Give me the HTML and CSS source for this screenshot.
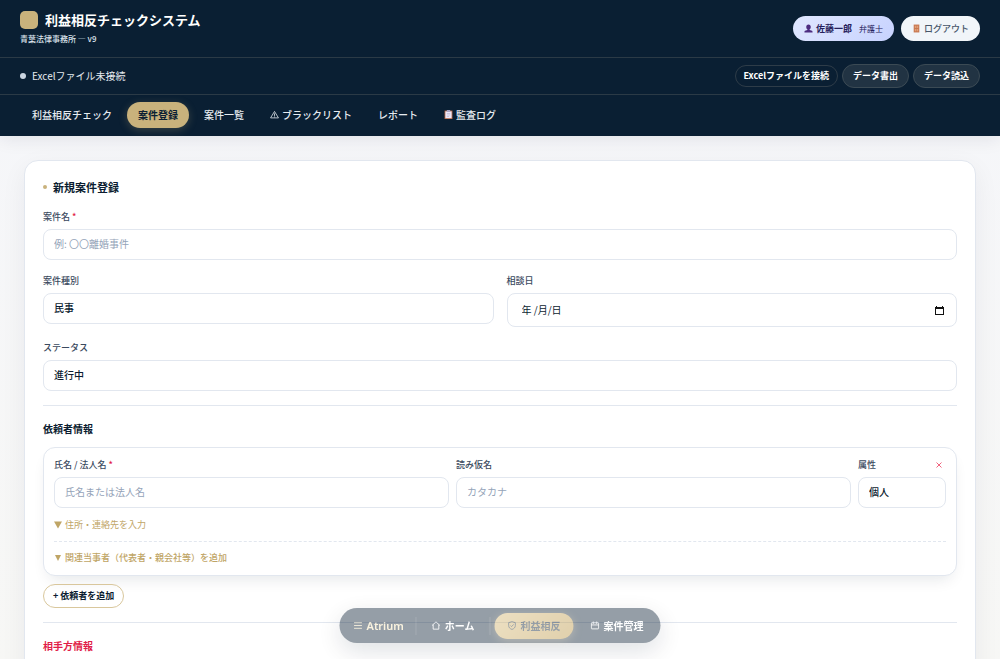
FILE: index.html
```html
<!DOCTYPE html>
<html lang="ja">
<head>
<meta charset="utf-8">
<meta name="viewport" content="width=device-width, initial-scale=1">
<title>利益相反チェックシステム</title>
<link rel="stylesheet" href="styles.css">
</head>
<body>
<header class="site-header">
  <div class="brand-row">
    <div class="brand-block">
      <div class="brand">
        <span class="logo"></span>
        <h1 class="brand-name">利益相反チェックシステム</h1>
      </div>
      <p class="firm">青葉法律事務所 — v9</p>
    </div>
    <div class="account">
      <span class="user-chip">
        <svg class="emoji" viewBox="0 0 16 16" aria-hidden="true"><path fill="#4d2c80" d="M8 1c2.600 0 4 1.700 4 4.200 0 2-.8 3.300-2 4.300v1.300l4.200 1.400c.7.300 1 1 1 2.800H.8c0-1.800.3-2.500 1-2.800L6 10.800V9.500C4.800 8.500 4 7.200 4 5.200 4 2.700 5.400 1 8 1z"/></svg>
        <strong>佐藤一郎</strong>
        <small class="role">弁護士</small>
      </span>
      <button type="button" class="logout">
        <svg class="emoji" viewBox="0 0 16 16" aria-hidden="true"><path fill="#c87850" d="M3 1h10v14H3z"/><path fill="#e0a078" d="M5 3h2.500v4H5zM8.500 3H11v4H8.500zM5 9h2.500v4H5zM8.500 9H11v4H8.500z"/></svg>
        ログアウト
      </button>
    </div>
  </div>
  <div class="file-row">
    <p class="file-status"><span class="status-dot"></span>Excelファイル未接続</p>
    <div class="file-actions">
      <button type="button" class="btn-file btn-connect">Excelファイルを接続</button>
      <button type="button" class="btn-file">データ書出</button>
      <button type="button" class="btn-file">データ読込</button>
    </div>
  </div>
  <nav class="tabs">
    <button type="button" class="tab">利益相反チェック</button>
    <button type="button" class="tab tab-active">案件登録</button>
    <button type="button" class="tab">案件一覧</button>
    <button type="button" class="tab">
      <svg class="emoji" viewBox="0 0 16 16" fill="none" stroke="currentColor" stroke-width="1.400" aria-hidden="true"><path d="M8 2.500L15 14H1zM8 6v4.500M8 11.500V13"/></svg>
      ブラックリスト
    </button>
    <button type="button" class="tab">レポート</button>
    <button type="button" class="tab">
      <svg class="emoji" viewBox="0 0 16 16" aria-hidden="true"><path fill="#b86b4b" d="M1 1h14v15H1z"/><path fill="#eee8f8" d="M2.500 2.500h11v12h-11z"/><path fill="#a9a4c4" d="M5 0h6v3.500H5zM5 6h6v1H5zM5 8.500h6v1H5zM5 11h4v1H5z"/></svg>
      監査ログ
    </button>
  </nav>
</header>

<main class="page">
  <form class="card">
    <h2 class="card-title">新規案件登録</h2>
    <div class="fields">
      <div class="field">
        <label for="case-name">案件名 <span class="required">*</span></label>
        <input class="control" id="case-name" type="text" placeholder="例: 〇〇離婚事件">
      </div>
      <div class="field-row">
        <div class="field">
          <label for="case-type">案件種別</label>
          <select class="control" id="case-type"><option>民事</option></select>
        </div>
        <div class="field">
          <label for="consult-date">相談日</label>
          <div class="control date-control">
            <input class="date-input" id="consult-date" type="text" value="年 /月/日">
            <button type="button" class="date-button" aria-label="カレンダー">
              <svg viewBox="0 0 9 9" aria-hidden="true"><path fill="#111" fill-rule="evenodd" d="M1 0h1v1h5V0h1v1h1v8H0V1h1zM1 3v5h7V3z"/></svg>
            </button>
          </div>
        </div>
      </div>
      <div class="field">
        <label for="status">ステータス</label>
        <select class="control" id="status"><option>進行中</option></select>
      </div>
    </div>

    <section class="party">
      <h3 class="party-title">依頼者情報</h3>
      <div class="party-card">
        <div class="party-grid">
          <div class="field">
            <label for="client-name">氏名 / 法人名 <span class="required">*</span></label>
            <input class="control" id="client-name" type="text" placeholder="氏名または法人名">
          </div>
          <div class="field">
            <label for="client-kana">読み仮名</label>
            <input class="control" id="client-kana" type="text" placeholder="カタカナ">
          </div>
          <div class="field">
            <div class="label-row">
              <label for="client-kind">属性</label>
              <button type="button" class="remove" aria-label="削除">
                <svg viewBox="0 0 6 6" aria-hidden="true"><path d="M.5.5l5 5M5.500.5l-5 5" fill="none" stroke="currentColor"/></svg>
              </button>
            </div>
            <select class="control" id="client-kind"><option>個人</option></select>
          </div>
        </div>
        <button type="button" class="expand"><svg viewBox="0 0 8 8" aria-hidden="true"><path d="M0 .5h8l-4 7z"/></svg>住所・連絡先を入力</button>
        <div class="related">
          <button type="button" class="expand expand-bold"><svg viewBox="0 0 8 8" aria-hidden="true"><path d="M1 1h6L4 7z"/></svg>関連当事者（代表者・親会社等）を追加</button>
        </div>
      </div>
      <button type="button" class="add">+ 依頼者を追加</button>
    </section>

    <section class="party">
      <h3 class="party-title party-opponent">相手方情報</h3>
    </section>
  </form>
</main>

<nav class="dock">
  <a class="dock-item dock-brand" href="#">
    <svg class="dock-icon" viewBox="0 0 16 16" aria-hidden="true"><path d="M1 3h14M1 8h14M1 13h14"/></svg>
    Atrium
  </a>
  <a class="dock-item dock-divided" href="#">
    <svg class="dock-icon" viewBox="0 0 16 16" aria-hidden="true"><path d="M1 8l7-6.500L15 8M3 6.500V14.500h10V6.500"/></svg>
    ホーム
  </a>
  <a class="dock-item dock-active" href="#">
    <svg class="dock-icon" viewBox="0 0 16 16" aria-hidden="true"><path d="M8 1l6 2v5c0 3.500-2.500 5.800-6 7-3.500-1.200-6-3.500-6-7V3zM5.200 8l2 2 3.800-4"/></svg>
    利益相反
  </a>
  <a class="dock-item" href="#">
    <svg class="dock-icon" viewBox="0 0 16 16" aria-hidden="true"><path d="M2.500 3h11q1 0 1 1v9q0 1-1 1h-11q-1 0-1-1V4q0-1 1-1zM1.500 7h13M5 1v4M11 1v4"/></svg>
    案件管理
  </a>
</nav>
</body>
</html>
```

FILE: styles.css
```css
:root {
  --navy: #0a1f33;
  --ink: #0b1c30;
  --gold: #c9b27c;
  --line: #e2e7ef;
  --label: #3b4a5e;
  --red: #e11d48;
}

* {
  box-sizing: border-box;
}

body {
  margin: 0;
  min-height: 100vh;
  background: linear-gradient(#f5f6fa, #f7f7f5);
  color: var(--ink);
  font: 10px/14px "Noto Sans CJK JP", "Noto Sans", sans-serif;
}

h1, h2, h3, p {
  margin: 0;
}

button, input, select {
  margin: 0;
  padding: 0;
  border: 0;
  background: none;
  color: inherit;
  font: inherit;
}

button {
  white-space: nowrap;
  cursor: pointer;
}

.emoji {
  width: 9px;
  height: 9px;
  flex: none;
}

.site-header {
  background: var(--navy);
  color: #fff;
  box-shadow: 0 4px 16px rgba(10, 31, 51, 0.08);
}

.brand-row, .file-row {
  display: flex;
  align-items: center;
  justify-content: space-between;
  padding: 0 20px;
  border-bottom: 1px solid #2b3a46;
}

.brand-row {
  height: 58px;
}

.brand-block {
  padding-bottom: 2px;
}

.brand {
  display: flex;
  align-items: center;
  gap: 7px;
}

.logo {
  width: 18px;
  height: 18px;
  border-radius: 5px;
  background: var(--gold);
}

.brand-name {
  font-size: 13px;
  line-height: 20px;
  font-weight: 700;
}

.firm {
  margin-top: 2px;
  color: #dbe3ec;
  font-size: 8px;
  font-weight: 500;
}

.account, .file-actions {
  display: flex;
  align-items: center;
}

.account {
  gap: 7px;
}

.user-chip, .logout {
  display: flex;
  align-items: center;
  gap: 3px;
  height: 25px;
  padding: 0 11px;
  border-radius: 13px;
  font-size: 9px;
}

.user-chip {
  background: linear-gradient(135deg, #e0e7ff, #c7d2fe);
  color: #26215c;
}

.role {
  margin-left: 4px;
  font-size: 8px;
}

.logout {
  background: #f1f5f9;
  color: #475569;
  font-weight: 500;
}

.file-row {
  height: 37px;
}

.file-status {
  display: flex;
  align-items: center;
  gap: 6px;
  color: #e6ebf0;
}

.status-dot {
  width: 6px;
  height: 6px;
  border-radius: 50%;
  background: #cbd5e1;
}

.file-actions {
  gap: 4px;
}

.btn-file {
  height: 24px;
  padding: 0 10px;
  border: 1px solid #3b4a54;
  border-radius: 12px;
  background: #213343;
  font-size: 9px;
  font-weight: 700;
}

.btn-connect {
  height: 22px;
  padding: 0 8px;
  border-color: #2e3c48;
  background: transparent;
}

.tabs {
  display: flex;
  align-items: center;
  gap: 4px;
  height: 41px;
  padding: 0 21px 2px;
}

.tab {
  display: flex;
  align-items: center;
  gap: 3px;
  height: 26px;
  padding: 0 11px;
  border-radius: 13px;
  color: #e6ebf0;
  font-weight: 500;
}

.tab-active {
  background: var(--gold);
  color: var(--navy);
  font-weight: 700;
  box-shadow: 0 2px 8px rgba(201, 178, 124, 0.25);
}

.page {
  padding: 24px 24px 0;
}

.card {
  min-height: 500px;
  padding: 18px;
  border: 1px solid var(--line);
  border-radius: 14px;
  background: #fff;
  box-shadow: 0 8px 26px rgba(10, 31, 51, 0.06);
}

.card-title {
  display: flex;
  align-items: center;
  gap: 6px;
  margin-bottom: 15px;
  font-size: 11px;
  line-height: 16px;
}

.card-title::before {
  content: "";
  width: 4px;
  height: 4px;
  border-radius: 50%;
  background: var(--gold);
}

.fields {
  display: grid;
  gap: 14px;
}

.field-row {
  display: grid;
  grid-template-columns: 1fr 1fr;
  align-items: start;
  gap: 13px;
}

.field {
  display: grid;
  gap: 5px;
  min-width: 0;
}

.field label {
  color: var(--label);
  font-size: 9px;
  font-weight: 500;
}

.required {
  color: var(--red);
}

.control {
  width: 100%;
  height: 31px;
  padding: 0 10px 2px;
  border: 1px solid var(--line);
  border-radius: 8px;
  background: #fff;
  appearance: none;
}

select.control {
  font-weight: 500;
}

.control::placeholder {
  color: #94a3b8;
  opacity: 1;
}

.date-control {
  display: flex;
  align-items: center;
  height: 34px;
  padding: 0 12px 0 14px;
}

.date-input {
  flex: 1;
  min-width: 0;
}

.date-button {
  display: flex;
}

.date-button svg {
  width: 9px;
  height: 9px;
}

.party {
  margin-top: 14px;
  padding-top: 15px;
  border-top: 1px solid var(--line);
}

.party-title {
  margin-bottom: 10px;
  font-size: 10px;
  line-height: 16px;
}

.party-opponent {
  color: var(--red);
}

.party-card {
  padding: 10px;
  border: 1px solid var(--line);
  border-radius: 12px;
  background: #fff;
  box-shadow: 0 8px 16px -6px rgba(10, 31, 51, 0.12);
}

.party-grid {
  display: grid;
  grid-template-columns: 1fr 1fr 88px;
  gap: 7px;
}

.label-row {
  display: flex;
  align-items: center;
  justify-content: space-between;
}

.remove {
  display: flex;
  padding: 4px;
  color: #f0647f;
}

.remove svg {
  width: 6px;
  height: 6px;
}

.expand {
  display: flex;
  align-items: center;
  gap: 3px;
  margin-top: 10px;
  color: #bfa566;
  font-size: 9px;
}

.expand svg {
  width: 8px;
  height: 8px;
  fill: currentColor;
}

.expand-bold {
  margin-top: 9px;
  font-weight: 500;
}

.related {
  margin-top: 9px;
  border-top: 1px dashed var(--line);
}

.add {
  height: 24px;
  margin-top: 8px;
  padding: 0 9px;
  border: 1px solid #d9c79c;
  border-radius: 12px;
  font-size: 9px;
  font-weight: 700;
}

.dock {
  position: fixed;
  bottom: 16px;
  left: 50%;
  display: flex;
  align-items: center;
  gap: 4px;
  height: 35px;
  padding: 0 4px;
  border-radius: 18px;
  background: var(--navy);
  box-shadow: 0 8px 24px rgba(10, 31, 51, 0.3);
  opacity: 0.43;
  transform: translateX(-50%);
}

.dock-item {
  display: flex;
  align-items: center;
  gap: 4px;
  height: 26px;
  padding: 0 13px;
  color: #fff;
  font-weight: 700;
  text-decoration: none;
  white-space: nowrap;
}

.dock-brand {
  padding: 0 8px 0 10px;
  color: #f3e3b5;
  font: 600 11px/14px "Noto Sans", sans-serif;
}

.dock-divided {
  height: 18px;
  padding: 0 15px;
  border: solid rgba(255, 255, 255, 0.15);
  border-width: 0 1px;
}

.dock-active {
  border-radius: 13px;
  background: linear-gradient(135deg, #d4b671, #b8923f);
  color: var(--navy);
  box-shadow: 0 2px 8px rgba(201, 178, 124, 0.4);
}

.dock-icon {
  width: 9px;
  height: 9px;
  fill: none;
  stroke: currentColor;
  stroke-width: 1.500;
}
```
